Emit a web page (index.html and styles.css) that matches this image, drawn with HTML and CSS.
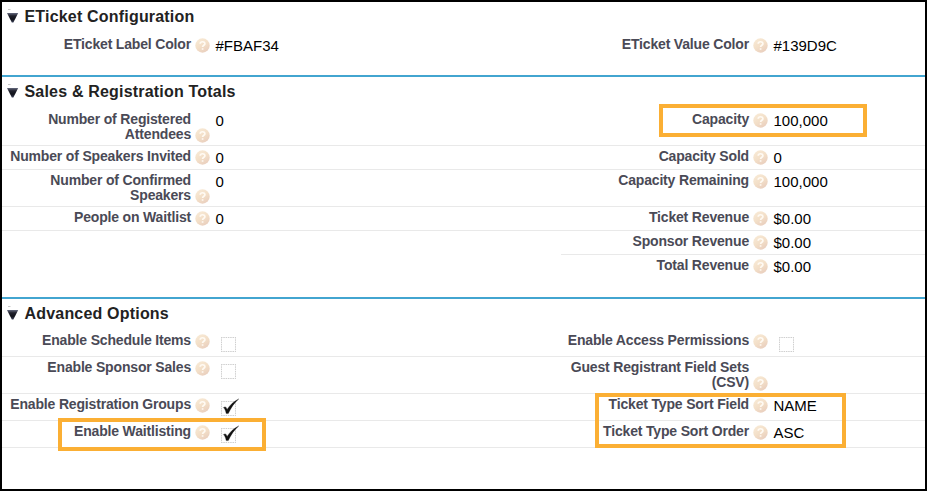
FILE: index.html
```
<!DOCTYPE html>
<html lang="en">
<head>
<meta charset="utf-8">
<title>Event Settings</title>
<link rel="stylesheet" href="styles.css">
</head>
<body>
<svg class="defs" width="0" height="0" aria-hidden="true">
  <defs>
    <linearGradient id="orb" x1=".2" y1="0" x2=".8" y2="1">
      <stop offset="0" stop-color="#f8ead6"/><stop offset=".5" stop-color="#f3dfc8"/><stop offset="1" stop-color="#e8cdbd"/>
    </linearGradient>
    <linearGradient id="tri" x1="0" y1="0" x2="0" y2="1">
      <stop offset="0" stop-color="#666b80"/><stop offset=".3" stop-color="#20212c"/><stop offset=".65" stop-color="#11121a"/><stop offset="1" stop-color="#3a4058"/>
    </linearGradient>
    <symbol id="help" viewBox="0 0 15 15">
      <circle cx="7.5" cy="7.5" r="7.2" fill="url(#orb)"/>
      <path d="M5.2 5.8C5.3 3.1 9.9 3.1 9.9 5.7C9.9 7.3 7.6 7.2 7.6 9.1M7.6 10.3V11.8" fill="none" stroke="#fffaf3" stroke-width="1.7"/>
    </symbol>
    <symbol id="arrow" viewBox="0 0 13 14">
      <path d="M2 .5H4.5" stroke="#c9c9c9"/>
      <path d="M1 4H12.2L7.4 13.6H5.8Z" fill="url(#tri)"/>
    </symbol>
    <symbol id="box" viewBox="0 0 20 18">
      <path d="M1 3.5H16M1 17.5H16M1.5 3V18M15.5 3V18" fill="none" stroke="#cfcfcf" stroke-dasharray="1.5 .8"/>
    </symbol>
    <symbol id="tick" viewBox="0 0 20 18">
      <path d="M3.4 9.6C5 8.3 6.3 8.7 7.1 11.4C9.8 7.1 13.6 3.4 18.8 .9C14.6 4.4 10.9 9.7 8.3 15.6H6.2C5.7 13 4.9 10.8 3.4 9.6Z" fill="#111" stroke="#111" stroke-width=".3"/>
    </symbol>
  </defs>
</svg>
<main class="panel">
  <section class="section first">
    <h2><svg class="arrow"><use href="#arrow"/></svg>ETicket Configuration</h2>
    <div class="row last">
      <div class="field"><span class="label">ETicket Label Color</span><svg class="help"><use href="#help"/></svg><span class="value">#FBAF34</span></div>
      <div class="field"><span class="label">ETicket Value Color</span><svg class="help"><use href="#help"/></svg><span class="value">#139D9C</span></div>
    </div>
  </section>
  <section class="section totals">
    <h2><svg class="arrow"><use href="#arrow"/></svg>Sales &amp; Registration Totals</h2>
    <div class="row tall">
      <div class="field"><span class="label">Number of Registered<br>Attendees</span><svg class="help"><use href="#help"/></svg><span class="value">0</span></div>
      <div class="field"><span class="label">Capacity</span><svg class="help"><use href="#help"/></svg><span class="value">100,000</span></div>
    </div>
    <div class="row">
      <div class="field"><span class="label">Number of Speakers Invited</span><svg class="help"><use href="#help"/></svg><span class="value">0</span></div>
      <div class="field"><span class="label">Capacity Sold</span><svg class="help"><use href="#help"/></svg><span class="value">0</span></div>
    </div>
    <div class="row tall">
      <div class="field"><span class="label">Number of Confirmed<br>Speakers</span><svg class="help"><use href="#help"/></svg><span class="value">0</span></div>
      <div class="field"><span class="label">Capacity Remaining</span><svg class="help"><use href="#help"/></svg><span class="value">100,000</span></div>
    </div>
    <div class="row">
      <div class="field"><span class="label">People on Waitlist</span><svg class="help"><use href="#help"/></svg><span class="value">0</span></div>
      <div class="field"><span class="label">Ticket Revenue</span><svg class="help"><use href="#help"/></svg><span class="value">$0.00</span></div>
    </div>
    <div class="row half">
      <div></div>
      <div class="field"><span class="label">Sponsor Revenue</span><svg class="help"><use href="#help"/></svg><span class="value">$0.00</span></div>
    </div>
    <div class="row last">
      <div></div>
      <div class="field"><span class="label">Total Revenue</span><svg class="help"><use href="#help"/></svg><span class="value">$0.00</span></div>
    </div>
  </section>
  <section class="section options">
    <h2><svg class="arrow"><use href="#arrow"/></svg>Advanced Options</h2>
    <div class="row">
      <div class="field"><span class="label">Enable Schedule Items</span><svg class="help"><use href="#help"/></svg><svg class="check"><use href="#box"/></svg></div>
      <div class="field"><span class="label">Enable Access Permissions</span><svg class="help"><use href="#help"/></svg><svg class="check"><use href="#box"/></svg></div>
    </div>
    <div class="row tall">
      <div class="field"><span class="label">Enable Sponsor Sales</span><svg class="help"><use href="#help"/></svg><svg class="check"><use href="#box"/></svg></div>
      <div class="field"><span class="label">Guest Registrant Field Sets<br>(CSV)</span><svg class="help"><use href="#help"/></svg></div>
    </div>
    <div class="row">
      <div class="field"><span class="label">Enable Registration Groups</span><svg class="help"><use href="#help"/></svg><svg class="check"><use href="#box"/><use href="#tick"/></svg></div>
      <div class="field"><span class="label">Ticket Type Sort Field</span><svg class="help"><use href="#help"/></svg><span class="value">NAME</span></div>
    </div>
    <div class="row">
      <div class="field"><span class="label">Enable Waitlisting</span><svg class="help"><use href="#help"/></svg><svg class="check"><use href="#box"/><use href="#tick"/></svg></div>
      <div class="field"><span class="label">Ticket Type Sort Order</span><svg class="help"><use href="#help"/></svg><span class="value">ASC</span></div>
    </div>
  </section>
  <div class="mark mark-capacity"></div>
  <div class="mark mark-waitlist"></div>
  <div class="mark mark-sort"></div>
</main>
</body>
</html>
```
FILE: styles.css
```
* { box-sizing: border-box; }
body { margin: 0; background: #fff; font-family: "Liberation Sans", Arial, sans-serif; }
.defs { position: absolute; }
.panel { position: relative; width: 927px; height: 491px; border: 2px solid #000; overflow: hidden; }
.section { border-top: 2px solid #42a5d0; }
.section.first { border-top: 0; height: 73px; }
.totals { height: 222px; }
h2 { display: flex; gap: 5.5px; margin: 0; padding: 5px 0 0 4px; height: 32px; font-size: 16px; line-height: 19px; color: #222; letter-spacing: .19px; white-space: nowrap; }
.options h2 { height: 31px; }
.arrow { width: 13px; height: 14px; margin-top: 2px; }
.row { display: grid; grid-template-columns: 558px 1fr; height: 24px; border-bottom: 1px solid #e9e9e9; }
.row.tall { height: 37px; }
.options .row { height: 27px; }
.options .row.tall { height: 37px; }
.row.last { border-bottom: 0; }
.row.half { border-bottom: 0; }
.row.half .field { margin-left: 1px; border-bottom: 1px solid #e9e9e9; grid-template-columns: 188px 15px 1fr; }
.field { display: grid; grid-template-columns: 189px 15px 1fr; column-gap: 4px; }
.label { padding-top: 3px; font-size: 14px; font-weight: bold; line-height: 15px; letter-spacing: -.17px; color: #4a4a56; text-align: right; white-space: nowrap; }
.help { width: 15px; height: 15px; align-self: start; margin-top: 4px; }
.label:has(br) + .help { margin-top: 19px; }
.value { padding: 3px 0 0 1.5px; font-size: 15px; line-height: 17px; color: #000; }
.check { width: 20px; height: 18px; margin: 4px 0 0 6px; }
.mark { position: absolute; border: 4px solid #fbaf34; }
.mark-capacity { left: 657px; top: 102px; width: 208px; height: 33px; }
.mark-waitlist { left: 56px; top: 416px; width: 208px; height: 33px; }
.mark-sort { left: 593px; top: 391px; width: 251px; height: 55px; }
```
